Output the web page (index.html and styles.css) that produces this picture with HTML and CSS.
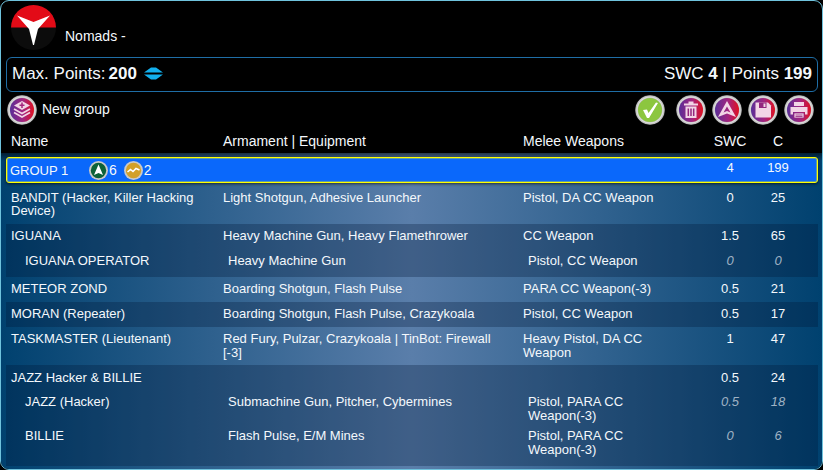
FILE: index.html
```html
<!DOCTYPE html>
<html lang="en">
<head>
<meta charset="utf-8">
<title>Army list</title>
<link rel="stylesheet" href="styles.css">
</head>
<body>
<svg class="defs" width="0" height="0" aria-hidden="true">
  <defs>
    <linearGradient id="pg" x1="0" y1="0" x2="1" y2="0">
      <stop offset="0" stop-color="#5a2f98"/>
      <stop offset="0.55" stop-color="#a3247f"/>
      <stop offset="1" stop-color="#e0101f"/>
    </linearGradient>
    <radialGradient id="ring" cx="0.5" cy="0.5" r="0.5">
      <stop offset="0.78" stop-color="#b5b5b5"/>
      <stop offset="0.86" stop-color="#dedede"/>
      <stop offset="0.95" stop-color="#b8b8b8"/>
      <stop offset="1" stop-color="#444"/>
    </radialGradient>
  </defs>
</svg>
<main class="panel">
  <header class="top">
    <svg class="logo" viewBox="0 0 45 45">
      <circle cx="22.5" cy="22.5" r="22.5" fill="#0c0c0c"/>
      <path d="M0 22.5a22.5 22.5 0 0 1 45 0z" fill="#e30b17"/>
      <path d="M6 10.5 L22.5 17 L39 10.5 L27 24 L23 40 L22 40 L18 24 Z" fill="#fff"/>
    </svg>
    <span class="faction">Nomads -</span>
  </header>
  <section class="bar">
    <div class="max">Max. Points: <b>200</b>
      <svg class="arrows" viewBox="0 0 21 15">
        <path d="M1 6.5 L8 1.5 H13 L20 6.5 Z M1 8.5 H20 L13 13.5 H8 Z" fill="#12b0ee"/>
      </svg>
    </div>
    <div class="totals">SWC <b>4</b> | Points <b>199</b></div>
  </section>
  <section class="tools">
    <div class="newgroup">
      <svg class="btn" viewBox="0 0 30 30">
        <circle cx="15" cy="15" r="15" fill="url(#ring)"/><circle cx="15" cy="15" r="12" fill="url(#pg)"/>
        <path d="M15 6 L23 10.5 L15 15 L7 10.5 Z" fill="#f2d5e6"/>
        <path d="M7 14 L15 18.5 L23 14 M7 17.5 L15 22 L23 17.5" fill="none" stroke="#f2d5e6" stroke-width="1.6"/>
        <path d="M15 7.5V13M12.5 10.3H17.5" stroke="#a3247f" stroke-width="1.5"/>
      </svg>
      <span>New group</span>
    </div>
    <div class="actions">
      <svg class="btn check" viewBox="0 0 30 30">
        <circle cx="15" cy="15" r="15" fill="url(#ring)"/><circle cx="15" cy="15" r="12" fill="#8cc63f"/>
        <path d="M8 15 L12 14.5 L13.5 18 L21 7.5 L23 8 L14 23 L12 23 Z" fill="#fff"/>
      </svg>
      <div class="group-btns">
        <svg class="btn" viewBox="0 0 30 30">
          <circle cx="15" cy="15" r="15" fill="url(#ring)"/><circle cx="15" cy="15" r="12" fill="url(#pg)"/>
          <path d="M8 8.5H22V10.5H8ZM12.5 8.5V6.5H17.5V8.5Z" fill="#f2d5e6"/>
          <path d="M9.5 11.5H20.5V23H9.5Z" fill="#f2d5e6"/>
          <path d="M12.3 13.5V21M15 13.5V21M17.7 13.5V21" stroke="#93267f" stroke-width="1.5"/>
        </svg>
        <svg class="btn" viewBox="0 0 30 30">
          <circle cx="15" cy="15" r="15" fill="url(#ring)"/><circle cx="15" cy="15" r="12" fill="url(#pg)"/>
          <path d="M15 6 L24 22 L15 18.5 L6 22 Z M15 11.5 L11.5 17.5 L15 16 L18.5 17.5 Z" fill="#f2d5e6" fill-rule="evenodd"/>
        </svg>
        <svg class="btn" viewBox="0 0 30 30">
          <circle cx="15" cy="15" r="15" fill="url(#ring)"/><circle cx="15" cy="15" r="12" fill="url(#pg)"/>
          <path d="M7.5 7.5H20L23 10.5V22.5H7.5Z" fill="#f2d5e6"/>
          <path d="M11 7.5H18.5V13H11Z" fill="#93267f"/>
          <path d="M15.5 8.5H17.5V12H15.5Z" fill="#f2d5e6"/>
        </svg>
        <svg class="btn" viewBox="0 0 30 30">
          <circle cx="15" cy="15" r="15" fill="url(#ring)"/><circle cx="15" cy="15" r="12" fill="url(#pg)"/>
          <path d="M10 7H20V11H10Z" fill="#f2d5e6"/>
          <path d="M6.5 12H23.5V19.5H21V17H9V19.5H6.5Z" fill="#f2d5e6"/>
          <path d="M10 18H20V23H10Z" fill="#f2d5e6" stroke="#93267f" stroke-width="0.8"/>
          <path d="M11.5 20H18.5M11.5 21.5H18.5" stroke="#93267f" stroke-width="0.8"/>
        </svg>
      </div>
    </div>
  </section>
  <div class="thead cols">
    <span>Name</span><span>Armament | Equipment</span><span>Melee Weapons</span><span class="num">SWC</span><span class="num">C</span>
  </div>
  <section class="list">
    <div class="group cols">
      <div class="gname"><span class="glabel">GROUP 1</span>
        <svg class="order" viewBox="0 0 19 19"><circle cx="9.5" cy="9.5" r="9.5" fill="#c9c9c9"/><circle cx="9.5" cy="9.5" r="7.7" fill="#0c6238"/><path d="M9.5 3.5 L14 14 L9.5 12 L5 14 Z" fill="#fff"/></svg><span class="cnt">6</span>
        <svg class="order" viewBox="0 0 19 19"><circle cx="9.5" cy="9.5" r="9.5" fill="#c9c9c9"/><circle cx="9.5" cy="9.5" r="7.7" fill="#d2a028"/><path d="M3.5 11 L6.5 8.5 L9 10.5 L12 7.5 L15.5 9" fill="none" stroke="#fff" stroke-width="1.6"/></svg><span class="cnt">2</span>
      </div>
      <div></div><div></div><div class="num up">4</div><div class="num up">199</div>
    </div>

    <div class="row cols"><div>BANDIT (Hacker, Killer Hacking Device)</div><div class="arm">Light Shotgun, Adhesive Launcher</div><div class="mel">Pistol, DA CC Weapon</div><div class="num">0</div><div class="num">25</div></div>

    <div class="block shade">
      <div class="row cols"><div>IGUANA</div><div class="arm">Heavy Machine Gun, Heavy Flamethrower</div><div class="mel">CC Weapon</div><div class="num">1.5</div><div class="num">65</div></div>
      <div class="sub cols"><div class="sn">IGUANA OPERATOR</div><div class="arm si">Heavy Machine Gun</div><div class="mel si">Pistol, CC Weapon</div><div class="num dim">0</div><div class="num dim">0</div></div>
    </div>

    <div class="row cols"><div>METEOR ZOND</div><div class="arm">Boarding Shotgun, Flash Pulse</div><div class="mel">PARA CC Weapon(-3)</div><div class="num">0.5</div><div class="num">21</div></div>

    <div class="row cols shade"><div>MORAN (Repeater)</div><div class="arm">Boarding Shotgun, Flash Pulse, Crazykoala</div><div class="mel">Pistol, CC Weapon</div><div class="num">0.5</div><div class="num">17</div></div>

    <div class="row cols"><div>TASKMASTER (Lieutenant)</div><div class="arm">Red Fury, Pulzar, Crazykoala | TinBot: Firewall [-3]</div><div class="mel">Heavy Pistol, DA CC Weapon</div><div class="num">1</div><div class="num">47</div></div>

    <div class="block shade">
      <div class="row cols"><div>JAZZ Hacker &amp; BILLIE</div><div></div><div></div><div class="num">0.5</div><div class="num">24</div></div>
      <div class="sub cols"><div class="sn">JAZZ (Hacker)</div><div class="arm si">Submachine Gun, Pitcher, Cybermines</div><div class="mel si">Pistol, PARA CC Weapon(-3)</div><div class="num dim">0.5</div><div class="num dim">18</div></div>
      <div class="sub cols"><div class="sn">BILLIE</div><div class="arm si">Flash Pulse, E/M Mines</div><div class="mel si">Pistol, PARA CC Weapon(-3)</div><div class="num dim">0</div><div class="num dim">6</div></div>
    </div>
  </section>
</main>
</body>
</html>
```
FILE: styles.css
```css
* { box-sizing: border-box; }
html, body { margin: 0; padding: 0; background: #000; }
body { width: 823px; height: 470px; overflow: hidden; font-family: "Liberation Sans", Arial, sans-serif; color: #f4f8fc; font-size: 13px; line-height: 13.5px; }
.defs { position: absolute; }
.panel { width: 823px; height: 470px; border: 1px solid #6fc3dd; border-radius: 9px; background: #000; overflow: hidden; display: flex; flex-direction: column; }
.top { height: 55px; display: flex; align-items: flex-end; padding: 4px 0 0 10px; }
.logo { width: 45px; height: 45px; display: block; align-self: flex-start; }
.faction { margin: 0 0 13px 9px; font-size: 14px; }
.bar { margin: 1px 4px 0 5px; height: 35px; border: 1px solid #1f6ea6; border-radius: 6px; display: flex; justify-content: space-between; align-items: center; padding: 0 5px 2px 5px; font-size: 17px; }
.max { display: flex; align-items: center; gap: 3px; }
.arrows { width: 21px; height: 15px; margin-left: 3px; }
.tools { height: 37px; display: flex; justify-content: space-between; align-items: center; padding: 0 8px 2px 6px; font-size: 14px; }
.newgroup { display: flex; align-items: center; gap: 5px; }
.btn { width: 30px; height: 30px; display: block; }
.actions { display: flex; gap: 11px; align-items: center; }
.group-btns { display: flex; gap: 6px; }
.cols { display: grid; grid-template-columns: 212px 300px 175px 64px 32px 28px; }
.thead { height: 24px; padding: 5px 0 0 10px; background: #000; font-size: 14px; line-height: 14px; }
.num { text-align: center; }
.list { flex: 1; padding: 4px 4px 3px 5px; background: linear-gradient(180deg, rgba(0,0,0,.55) 0, rgba(0,0,0,0) 8px), linear-gradient(90deg, #00416f 0, #5a7eaa 50%, #00416f 100%); display: flex; flex-direction: column; }
.group { height: 26px; flex: none; margin-bottom: 2px; background: #0a68fb; border: 1px solid #ff0; border-radius: 3px; padding: 1px 0 0 4px; align-items: center; box-shadow: 0 1px 3px rgba(0,0,0,.6), inset 0 0 0 1px rgba(255,255,0,.35); }
.gname { display: flex; align-items: center; grid-column: 1; white-space: nowrap; margin-left: -1px; }
.glabel { width: 79px; }
.order { width: 19px; height: 19px; flex: none; }
.cnt { font-size: 14px; margin: 0 7px 0 1px; }
.up { margin-top: -5px; }
.row { padding: 5.5px 0 6px 5px; }
.shade { background: rgba(0,20,50,.29); }
.sub { padding: 11px 0 0 5px; }
.sub + .sub { padding-top: 7px; }
.block { padding-bottom: 9.5px; }
.block .row { padding-bottom: 0; }
.sn { padding-left: 14px; }
.arm { padding-right: 15px; }
.mel { padding-right: 30px; }
.si { padding-left: 5px; }
.dim { font-style: italic; color: #9fb2c4; }
```
